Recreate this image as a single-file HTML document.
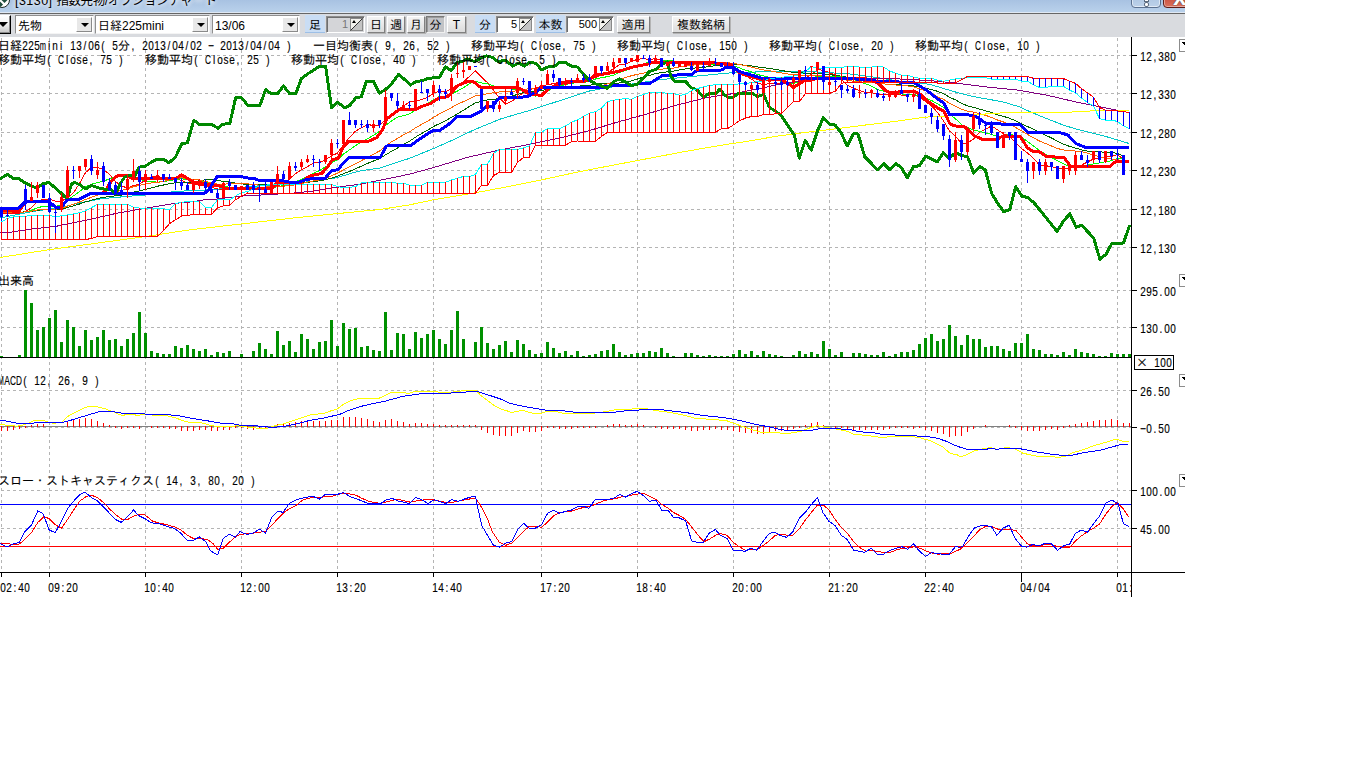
<!DOCTYPE html>
<html lang="ja"><head><meta charset="utf-8"><title>[3130] 指数先物/オプションチャート</title>
<style>
html,body{margin:0;padding:0;background:#fff;width:1366px;height:768px;overflow:hidden}
body{position:relative;font-family:"Liberation Sans","IPAGothic",sans-serif;font-size:12px;color:#000}
.chart{position:absolute;left:0;top:0}
.chart text.c{font-family:"IPAGothic","Noto Sans CJK JP",monospace;font-size:12px;stroke:#000;stroke-width:.1px}
.chart text.l{font-family:"Liberation Sans",sans-serif;font-size:12.5px;text-anchor:middle;stroke:#000;stroke-width:.15px}
#win{position:absolute;left:0;top:0;width:1185px;height:37px;overflow:hidden;z-index:2}
#title{position:absolute;left:0;top:0;width:1185px;height:12px;background:linear-gradient(#a8c2e2,#b9d1eb)}
#ttext{position:absolute;left:15px;top:-6px;font:12.5px/14px "Liberation Sans","Noto Sans CJK JP",sans-serif;color:#000;white-space:nowrap;text-shadow:0 0 5px #fff,0 0 5px #fff}
#ttext .n{letter-spacing:.45px}
#ttext .j{letter-spacing:-.4px}
#ticon{position:absolute;left:-6px;top:-8px;width:16px;height:16px;border-radius:50%;border:1px solid #1c2a24;background:#fff;box-sizing:border-box;overflow:hidden}
#ticon i{position:absolute;left:7px;top:4px;width:5px;height:5px;background:#1e4d3d;transform:rotate(45deg)}
#ticon b{position:absolute;left:2px;top:9px;width:5px;height:5px;background:#1e4d3d;transform:rotate(45deg)}
#bhelp{position:absolute;left:1131px;top:-10px;width:30px;height:18px;border:1px solid #5b7190;border-radius:0 0 4px 4px;box-sizing:border-box;background:linear-gradient(#a4bedd,#bdd2ea);box-shadow:inset 0 0 0 1px rgba(255,255,255,.55)}
#bhelp b{position:absolute;left:13px;top:12px;width:3px;height:3px;background:#fff;border:1px solid #5b6b7f;border-radius:2px;box-sizing:content-box;margin:-1px}
#bhelp u{position:absolute;left:13px;top:8px;width:3px;height:3px;background:#fff;border:1px solid #5b6b7f;border-top:0;box-sizing:content-box;margin:-1px}
#bclose{position:absolute;left:1163px;top:-10px;width:40px;height:18px;border:1px solid #5e1c17;border-radius:0 0 4px 4px;box-sizing:border-box;background:linear-gradient(#c0392b,#d9705c);box-shadow:inset 0 0 0 1px rgba(255,255,255,.4)}
#bclose span{position:absolute;left:9px;top:-2px;font:bold 24px/16px "Liberation Sans",sans-serif;color:#fff;text-shadow:0 0 1px #444,0 0 1px #444}
#tline1{position:absolute;left:0;top:12px;width:1185px;height:1px;background:#dfe8f3}
#tline2{position:absolute;left:0;top:13px;width:1185px;height:1px;background:#666}
#tbar{position:absolute;left:0;top:14px;width:1185px;height:23px;background:#d9dbdf}
.cb{position:absolute;top:1px;height:19px;background:#fff;box-sizing:border-box;border:1px solid;border-color:#8f8f8f #f4f4f4 #f4f4f4 #8f8f8f}
.cb .t{position:absolute;left:2px;top:3px;font:12px/14px "Liberation Sans","IPAGothic",sans-serif;white-space:nowrap}
.cb .a{position:absolute;right:1px;top:1px;width:16px;height:15px;box-sizing:border-box;background:#e8e8e8;border:1px solid;border-color:#fff #8a8a8a #8a8a8a #fff}
.cb .a:after{content:"";position:absolute;left:4px;top:5px;border:4px solid transparent;border-top:4px solid #000;border-bottom:0}
#lbtn{position:absolute;left:-10px;top:1px;width:21px;height:19px;box-sizing:border-box;background:linear-gradient(#fff,#f2f2f2 45%,#c4c4c4);border:1px solid;border-color:#fff #000 #000 #fff;box-shadow:inset -1px -1px 0 #8a8a8a}
#lbtn i{position:absolute;left:7px;top:6px;border:5px solid transparent;border-top:5px solid #000;border-bottom:0}
.lb{position:absolute;top:1px;height:18px;background:#c9ddf4;border-bottom:1px solid #9dbfe6;box-sizing:border-box;font:12px/21px "Liberation Sans","IPAGothic",sans-serif;text-align:center;overflow:hidden}
.sp{position:absolute;top:2px;height:17px;background:#fff;box-sizing:border-box;border:1px solid;border-color:#8c8c8c #fff #fff #8c8c8c;box-shadow:inset 1px 1px 0 #6e6e6e}
.sp.dis{background:#d4d5d8}
.sp .v{position:absolute;right:16px;top:0px;font:11px/14px "Liberation Sans",sans-serif}
.sp.dis .v{color:#777}
.sp .ic{position:absolute;right:1px;top:1px;width:13px;height:13px}
.bt{position:absolute;top:2px;height:17px;box-sizing:border-box;background:linear-gradient(#f4f4f4,#dcdcdc);border:1px solid;border-color:#fff #808080 #808080 #fff;box-shadow:1px 1px 0 #b4b4b4;font:12px/16px "Liberation Sans","IPAGothic",sans-serif;text-align:center;white-space:nowrap;overflow:hidden}
.bt.on{background:#c2c3c6;border-color:#7a7a7a #f0f0f0 #f0f0f0 #7a7a7a;box-shadow:inset 1px 1px 0 #9a9a9a}
</style></head><body>
<div id="win">
 <div id="title"><div id="ticon"><i></i><b></b></div><div id="ttext"><span class="n">[3130] </span><span class="j">指数先物/オプションチャート</span></div><div id="bhelp"><u></u><b></b></div><div id="bclose"><span>x</span></div></div>
 <div id="tline1"></div><div id="tline2"></div>
 <div id="tbar">
  <div id="lbtn"><i></i></div>
  <div class="cb" style="left:15px;width:79px"><div class="t">先物</div><div class="a"></div></div>
  <div class="cb" style="left:95px;width:115px"><div class="t">日経225mini</div><div class="a"></div></div>
  <div class="cb" style="left:212px;width:88px"><div class="t">13/06</div><div class="a"></div></div>
  <div class="lb" style="left:305px;width:20px">足</div>
  <div class="sp dis" style="left:326px;width:39px"><div class="v">1</div><svg class="ic" viewBox="0 0 13 13"><rect x=".5" y=".5" width="12" height="12" fill="#f4f3ee" stroke="#8a8a8a"/><path d="M12 1L1 12H12z" fill="#c4c4c4"/><path d="M12.5 .5L.5 12.5" stroke="#333" fill="none"/><path d="M2 5l2-3 2 3z" fill="#000"/></svg></div>
  <div class="bt" style="left:367px;width:18px">日</div>
  <div class="bt" style="left:387px;width:18px">週</div>
  <div class="bt" style="left:407px;width:18px">月</div>
  <div class="bt on" style="left:426px;width:19px">分</div>
  <div class="bt" style="left:447px;width:19px">T</div>
  <div class="lb" style="left:475px;width:20px">分</div>
  <div class="sp" style="left:496px;width:38px"><div class="v">5</div><svg class="ic" viewBox="0 0 13 13"><rect x=".5" y=".5" width="12" height="12" fill="#f4f3ee" stroke="#8a8a8a"/><path d="M12 1L1 12H12z" fill="#c4c4c4"/><path d="M12.5 .5L.5 12.5" stroke="#333" fill="none"/><path d="M2 5l2-3 2 3z" fill="#000"/></svg></div>
  <div class="lb" style="left:536px;width:29px">本数</div>
  <div class="sp" style="left:566px;width:48px"><div class="v">500</div><svg class="ic" viewBox="0 0 13 13"><rect x=".5" y=".5" width="12" height="12" fill="#f4f3ee" stroke="#8a8a8a"/><path d="M12 1L1 12H12z" fill="#c4c4c4"/><path d="M12.5 .5L.5 12.5" stroke="#333" fill="none"/><path d="M2 5l2-3 2 3z" fill="#000"/></svg></div>
  <div class="bt" style="left:617px;width:33px">適用</div>
  <div class="bt" style="left:672px;width:58px">複数銘柄</div>
 </div>
</div>
<svg class="chart" width="1185" height="768" viewBox="0 0 1185 768">
<g shape-rendering="crispEdges">
<path d="M1.5 38V572M49.5 38V572M145.5 38V572M241.5 38V572M337.5 38V572M433.5 38V572M541.5 38V572M637.5 38V572M733.5 38V572M829.5 38V572M925.5 38V572M1021.5 38V572M1117.5 38V572M1 55.5H1131M1 93.5H1131M1 132.5H1131M1 170.5H1131M1 209.5H1131M1 247.5H1131M1 290.5H1131M1 327.5H1131M1 390.5H1131M1 427.5H1131M1 490.5H1131M1 528.5H1131" stroke="#b4b4b4" stroke-width="1" stroke-dasharray="3 3" fill="none"/>
<polyline points="1.5,213.0 7.5,213.8 13.5,213.5 19.5,213.2 25.5,211.7 31.5,207.7 37.5,201.6 43.5,199.1 49.5,199.4 55.5,201.1 61.5,201.1 67.5,198.0 73.5,192.7 79.5,183.5 85.5,172.7 91.5,167.4 97.5,167.4 103.5,169.7 109.5,174.4 115.5,181.4 121.5,186.1 127.5,187.9 133.5,185.5 139.5,184.1 145.5,180.1 151.5,177.0 157.5,176.3 163.5,177.9 169.5,177.2 175.5,178.8 181.5,180.3 187.5,183.2 193.5,184.0 199.5,184.9 205.5,186.0 211.5,187.4 217.5,189.0 223.5,189.0 229.5,189.5 235.5,189.8 241.5,188.4 247.5,186.8 253.5,188.1 259.5,188.9 265.5,189.6 271.5,188.9 277.5,185.8 283.5,183.6 289.5,178.9 295.5,173.7 301.5,169.8 307.5,166.7 313.5,163.0 319.5,162.4 325.5,159.9 331.5,155.9 337.5,153.0 343.5,145.0 349.5,137.3 355.5,131.2 361.5,127.8 367.5,124.6 373.5,125.4 379.5,125.4 385.5,119.8 391.5,114.3 397.5,109.7 403.5,105.9 409.5,102.2 415.5,100.7 421.5,99.8 427.5,97.3 433.5,93.4 439.5,90.8 445.5,91.8 451.5,88.7 457.5,84.7 463.5,81.8 469.5,76.4 475.5,70.9 481.5,77.1 487.5,82.7 493.5,90.3 499.5,98.0 505.5,104.0 511.5,101.4 517.5,97.4 523.5,92.2 529.5,89.8 535.5,88.1 541.5,86.1 547.5,84.6 553.5,83.7 559.5,82.2 565.5,80.8 571.5,80.3 577.5,81.1 583.5,81.4 589.5,80.3 595.5,77.2 601.5,74.8 607.5,72.4 613.5,68.8 619.5,64.6 625.5,64.0 631.5,61.5 637.5,59.3 643.5,58.7 649.5,59.6 655.5,58.5 661.5,60.3 667.5,61.8 673.5,63.3 679.5,63.1 685.5,63.9 691.5,64.5 697.5,64.5 703.5,64.6 709.5,64.6 715.5,64.9 721.5,64.3 727.5,65.8 733.5,67.2 739.5,71.2 745.5,75.6 751.5,79.2 757.5,83.3 763.5,84.4 769.5,83.8 775.5,83.5 781.5,83.5 787.5,82.6 793.5,82.3 799.5,80.6 805.5,78.1 811.5,74.3 817.5,69.6 823.5,70.3 829.5,72.7 835.5,74.8 841.5,79.5 847.5,85.2 853.5,88.3 859.5,90.4 865.5,92.7 871.5,92.7 877.5,94.0 883.5,94.2 889.5,94.5 895.5,94.3 901.5,95.1 907.5,95.1 913.5,94.3 919.5,97.4 925.5,101.3 931.5,106.0 937.5,112.3 943.5,120.8 949.5,130.9 955.5,136.3 961.5,143.2 967.5,143.0 973.5,139.1 979.5,132.2 985.5,129.5 991.5,125.8 997.5,129.8 1003.5,133.7 1009.5,135.9 1015.5,142.6 1021.5,148.4 1027.5,153.0 1033.5,158.2 1039.5,165.1 1045.5,165.7 1051.5,166.6 1057.5,168.2 1063.5,168.9 1069.5,168.0 1075.5,166.6 1081.5,165.1 1087.5,162.0 1093.5,159.1 1099.5,157.8 1105.5,157.1 1111.5,156.3 1117.5,154.7 1123.5,159.4" fill="none" stroke="#ff0000" stroke-width="1" />
<polyline points="0.0,218.0 30.0,212.0 64.4,206.6 79.0,203.0 102.5,198.6 127.4,196.4 146.4,194.9 178.6,191.2 200.0,190.5 258.8,185.9 292.5,183.7 321.8,180.0 336.4,177.8 358.4,171.2 380.0,168.0 409.3,158.4 433.4,148.6 453.2,139.8 473.7,130.0 501.0,118.8 530.0,110.3 559.3,100.8 588.6,91.2 603.2,88.3 632.5,83.9 661.8,79.5 691.0,76.6 730.0,72.9 770.0,71.5 810.0,71.5 850.0,74.0 880.0,78.0 900.0,81.5 929.3,84.2 943.9,88.6 958.6,92.9 973.2,96.6 990.0,99.5 1004.6,102.4 1019.3,106.8 1033.9,113.4 1048.6,119.3 1063.2,125.1 1077.8,129.5 1092.5,133.2 1107.1,136.9 1121.8,141.2 1128.8,143.4" fill="none" stroke="#00c8c8" stroke-width="1" />
<polyline points="1.5,212.2 7.5,212.4 13.5,212.3 19.5,212.2 25.5,211.9 31.5,211.3 37.5,210.3 43.5,209.7 49.5,209.7 55.5,209.8 61.5,209.2 67.5,207.5 73.5,205.8 79.5,204.0 85.5,201.9 91.5,200.2 97.5,198.6 103.5,197.4 109.5,196.5 115.5,195.8 121.5,195.1 127.5,193.7 133.5,192.1 139.5,190.9 145.5,189.4 151.5,187.9 157.5,186.2 163.5,185.0 169.5,183.7 175.5,182.8 181.5,182.4 187.5,182.6 193.5,182.0 199.5,180.8 205.5,179.8 211.5,179.7 217.5,180.8 223.5,181.2 229.5,182.0 235.5,183.2 241.5,183.8 247.5,184.6 253.5,184.9 259.5,184.9 265.5,184.9 271.5,184.4 277.5,184.2 283.5,184.5 289.5,183.9 295.5,183.6 301.5,182.9 307.5,182.3 313.5,181.5 319.5,180.9 325.5,179.8 331.5,178.1 337.5,176.2 343.5,173.7 349.5,171.4 355.5,168.9 361.5,166.1 367.5,163.4 373.5,161.0 379.5,158.6 385.5,154.9 391.5,151.3 397.5,148.0 403.5,144.6 409.5,141.2 415.5,137.1 421.5,133.5 427.5,130.3 433.5,126.5 439.5,123.6 445.5,120.7 451.5,117.3 457.5,113.9 463.5,110.3 469.5,106.4 475.5,102.9 481.5,101.5 487.5,99.8 493.5,99.4 499.5,98.6 505.5,97.4 511.5,96.2 517.5,94.4 523.5,92.7 529.5,91.4 535.5,91.1 541.5,90.6 547.5,89.3 553.5,88.3 559.5,87.4 565.5,87.1 571.5,86.7 577.5,86.1 583.5,85.9 589.5,85.3 595.5,84.2 601.5,83.9 607.5,83.6 613.5,83.3 619.5,83.0 625.5,82.8 631.5,80.8 637.5,79.0 643.5,77.0 649.5,75.3 655.5,73.7 661.5,72.6 667.5,71.8 673.5,71.2 679.5,69.9 685.5,68.9 691.5,68.3 697.5,67.8 703.5,67.4 709.5,66.4 715.5,65.7 721.5,65.1 727.5,64.7 733.5,64.5 739.5,64.6 745.5,65.4 751.5,66.0 757.5,66.9 763.5,67.6 769.5,68.5 775.5,69.3 781.5,70.4 787.5,71.6 793.5,72.4 799.5,72.7 805.5,73.2 811.5,73.1 817.5,73.1 823.5,73.8 829.5,74.6 835.5,75.4 841.5,76.2 847.5,77.3 853.5,78.5 859.5,79.7 865.5,80.9 871.5,81.8 877.5,83.0 883.5,83.9 889.5,84.4 895.5,84.7 901.5,85.0 907.5,85.3 913.5,85.9 919.5,87.1 925.5,88.2 931.5,89.5 937.5,91.3 943.5,93.6 949.5,97.2 955.5,99.9 961.5,103.3 967.5,105.9 973.5,107.3 979.5,109.1 985.5,110.8 991.5,112.5 997.5,114.8 1003.5,116.4 1009.5,118.2 1015.5,120.8 1021.5,123.7 1027.5,126.6 1033.5,129.2 1039.5,132.3 1045.5,135.1 1051.5,138.0 1057.5,141.2 1063.5,144.1 1069.5,146.4 1075.5,148.1 1081.5,149.8 1087.5,151.2 1093.5,151.8 1099.5,151.8 1105.5,152.3 1111.5,152.4 1117.5,153.5 1123.5,155.9" fill="none" stroke="#006400" stroke-width="1" />
<polyline points="0.0,233.0 8.8,232.5 29.3,229.3 55.6,226.4 87.8,219.8 117.1,213.2 146.4,208.1 175.7,203.3 190.0,202.0 204.6,199.8 216.4,199.1 241.2,196.1 292.5,193.2 314.5,191.0 336.4,187.3 358.4,184.4 380.0,180.3 409.3,174.2 433.4,167.6 467.8,157.3 497.1,150.5 526.4,144.9 559.3,138.1 588.6,130.8 617.8,122.0 647.1,113.9 676.4,105.2 705.7,97.8 720.0,95.6 734.6,93.4 749.3,90.5 763.9,87.6 781.5,83.9 796.1,81.7 815.2,79.2 837.1,78.4 866.4,78.4 900.0,79.0 929.3,80.5 958.6,83.4 987.8,87.1 1017.1,90.0 1046.4,95.1 1077.8,102.4 1092.5,105.4 1107.1,108.3 1121.8,111.2 1129.0,112.5" fill="none" stroke="#800080" stroke-width="1" />
<polyline points="1.5,212.5 7.5,212.9 13.5,212.7 19.5,212.6 25.5,211.8 31.5,210.3 37.5,207.7 43.5,206.3 49.5,206.3 55.5,206.4 61.5,204.4 67.5,199.8 73.5,195.9 79.5,191.4 85.5,186.9 91.5,184.3 97.5,182.7 103.5,181.2 109.5,178.9 115.5,177.1 121.5,176.8 127.5,177.7 133.5,177.6 139.5,179.2 145.5,180.8 151.5,181.6 157.5,182.1 163.5,181.7 169.5,180.6 175.5,179.5 181.5,178.7 187.5,179.8 193.5,181.0 199.5,181.0 205.5,182.4 211.5,183.8 217.5,186.1 223.5,186.5 229.5,187.2 235.5,187.9 241.5,187.9 247.5,187.9 253.5,188.5 259.5,189.2 265.5,189.7 271.5,188.6 277.5,186.3 283.5,185.8 289.5,183.9 295.5,181.7 301.5,179.3 307.5,176.3 313.5,173.3 319.5,170.6 325.5,166.8 331.5,162.9 337.5,159.9 343.5,154.0 349.5,149.9 355.5,145.6 361.5,141.9 367.5,138.8 373.5,135.2 379.5,131.4 385.5,125.5 391.5,121.0 397.5,117.2 403.5,115.7 409.5,113.8 415.5,110.2 421.5,107.1 427.5,103.5 433.5,99.7 439.5,96.5 445.5,96.2 451.5,94.2 457.5,91.0 463.5,87.6 469.5,83.6 475.5,81.4 481.5,82.9 487.5,83.7 493.5,86.0 499.5,87.2 505.5,87.5 511.5,89.2 517.5,90.0 523.5,91.2 529.5,93.9 535.5,96.1 541.5,93.8 547.5,91.0 553.5,87.9 559.5,86.0 565.5,84.5 571.5,83.2 577.5,82.8 583.5,82.6 589.5,81.2 595.5,79.0 601.5,77.6 607.5,76.7 613.5,75.1 619.5,72.4 625.5,70.6 631.5,68.2 637.5,65.8 643.5,63.8 649.5,62.1 655.5,61.3 661.5,60.9 667.5,60.5 673.5,61.0 679.5,61.3 685.5,61.2 691.5,62.4 697.5,63.1 703.5,63.9 709.5,63.9 715.5,64.4 721.5,64.4 727.5,65.1 733.5,65.9 739.5,67.9 745.5,70.2 751.5,71.8 757.5,74.6 763.5,75.8 769.5,77.5 775.5,79.5 781.5,81.4 787.5,83.0 793.5,83.3 799.5,82.2 805.5,80.8 811.5,78.9 817.5,76.1 823.5,76.3 829.5,76.6 835.5,76.5 841.5,76.9 847.5,77.4 853.5,79.3 859.5,81.5 865.5,83.8 871.5,86.1 877.5,89.6 883.5,91.2 889.5,92.4 895.5,93.5 901.5,93.9 907.5,94.6 913.5,94.2 919.5,96.0 925.5,97.8 931.5,100.5 937.5,103.7 943.5,107.5 949.5,114.1 955.5,118.8 961.5,124.6 967.5,127.6 973.5,129.9 979.5,131.5 985.5,132.9 991.5,134.5 997.5,136.4 1003.5,136.4 1009.5,134.0 1015.5,136.0 1021.5,137.1 1027.5,141.4 1033.5,146.0 1039.5,150.5 1045.5,154.1 1051.5,157.5 1057.5,160.6 1063.5,163.6 1069.5,166.6 1075.5,166.1 1081.5,165.8 1087.5,165.1 1093.5,164.0 1099.5,162.9 1105.5,161.8 1111.5,160.7 1117.5,158.4 1123.5,159.3" fill="none" stroke="#00ff00" stroke-width="1" />
<polyline points="1.5,212.2 7.5,212.5 13.5,212.4 19.5,212.3 25.5,211.9 31.5,211.2 37.5,209.8 43.5,209.1 49.5,209.2 55.5,209.2 61.5,208.4 67.5,206.3 73.5,204.3 79.5,202.0 85.5,199.4 91.5,197.3 97.5,195.2 103.5,193.7 109.5,192.6 115.5,191.7 121.5,190.6 127.5,188.7 133.5,186.7 139.5,185.3 145.5,183.8 151.5,182.9 157.5,182.4 163.5,181.5 169.5,179.8 175.5,178.3 181.5,177.7 187.5,178.7 193.5,179.3 199.5,180.1 205.5,181.6 211.5,182.7 217.5,184.1 223.5,184.1 229.5,183.9 235.5,183.7 241.5,183.3 247.5,183.8 253.5,184.7 259.5,185.1 265.5,186.1 271.5,186.2 277.5,186.2 283.5,186.2 289.5,185.5 295.5,184.8 301.5,183.6 307.5,182.1 313.5,180.9 319.5,179.9 325.5,178.3 331.5,175.7 337.5,173.1 343.5,169.9 349.5,166.9 355.5,163.6 361.5,160.6 367.5,157.5 373.5,154.2 379.5,151.0 385.5,146.2 391.5,141.9 397.5,138.5 403.5,134.8 409.5,131.8 415.5,127.9 421.5,124.5 427.5,121.2 433.5,117.4 439.5,113.9 445.5,110.9 451.5,107.6 457.5,104.1 463.5,101.6 469.5,98.7 475.5,95.8 481.5,95.0 487.5,93.6 493.5,92.8 499.5,91.9 505.5,91.9 511.5,91.7 517.5,90.5 523.5,89.4 529.5,88.8 535.5,88.7 541.5,88.3 547.5,87.3 553.5,87.0 559.5,86.6 565.5,86.0 571.5,86.2 577.5,86.4 583.5,86.9 589.5,87.6 595.5,87.5 601.5,85.7 607.5,83.9 613.5,81.5 619.5,79.2 625.5,77.5 631.5,75.7 637.5,74.3 643.5,73.2 649.5,71.6 655.5,70.1 661.5,69.2 667.5,68.6 673.5,68.1 679.5,66.9 685.5,65.9 691.5,65.3 697.5,64.5 703.5,63.9 709.5,63.0 715.5,62.8 721.5,62.6 727.5,62.8 733.5,63.4 739.5,64.6 745.5,65.7 751.5,67.1 757.5,68.8 763.5,69.9 769.5,70.7 775.5,72.0 781.5,72.9 787.5,74.0 793.5,74.6 799.5,75.0 805.5,75.5 811.5,75.3 817.5,75.3 823.5,76.1 829.5,77.0 835.5,78.0 841.5,79.1 847.5,80.2 853.5,81.3 859.5,81.8 865.5,82.3 871.5,82.5 877.5,82.9 883.5,83.8 889.5,84.5 895.5,85.0 901.5,85.4 907.5,86.0 913.5,86.8 919.5,88.7 925.5,90.8 931.5,93.3 937.5,96.7 943.5,99.4 949.5,103.3 955.5,106.1 961.5,109.2 967.5,111.1 973.5,112.1 979.5,113.7 985.5,115.3 991.5,117.5 997.5,120.0 1003.5,122.0 1009.5,124.1 1015.5,127.4 1021.5,130.8 1027.5,134.5 1033.5,137.9 1039.5,141.0 1045.5,143.5 1051.5,146.0 1057.5,148.5 1063.5,150.0 1069.5,150.3 1075.5,151.1 1081.5,151.5 1087.5,153.2 1093.5,155.0 1099.5,156.7 1105.5,158.0 1111.5,159.1 1117.5,159.5 1123.5,161.4" fill="none" stroke="#ff6400" stroke-width="1" />
<polyline points="0.0,257.5 50.0,249.5 146.0,236.5 190.0,229.8 241.0,224.0 292.5,218.1 336.4,213.7 380.0,209.5 409.3,204.9 433.4,199.8 475.2,192.8 511.8,185.9 541.0,180.0 580.0,171.5 682.3,152.0 720.0,145.4 749.3,141.0 778.6,135.9 807.8,132.2 837.1,128.6 866.4,124.9 895.7,121.3 914.6,118.6 929.3,116.8 958.6,115.3 987.8,113.9 1004.6,112.7 1046.4,112.2 1070.5,112.2 1077.8,111.2 1121.8,110.5 1128.8,110.5" fill="none" stroke="#ffff00" stroke-width="1" />
<polyline points="0.0,210.3 19.0,211.3 25.6,201.5 49.0,201.5 55.6,207.3 61.5,207.3 67.3,199.3 79.1,199.3 90.8,193.4 102.5,193.4 106.1,189.8 111.3,181.0 117.1,175.9 125.9,175.1 131.8,178.4 175.7,178.8 181.6,174.8 187.4,178.4 193.3,182.5 200.0,182.5 206.1,184.4 219.3,185.9 225.1,188.1 272.0,188.1 277.8,182.2 301.3,182.2 307.1,177.8 311.5,175.6 321.8,173.4 327.6,166.9 332.8,159.2 337.9,158.8 343.7,146.4 348.8,141.5 367.8,141.5 376.6,137.8 382.5,129.8 386.9,118.8 398.6,110.0 416.1,109.3 422.0,106.4 430.8,103.4 439.6,97.6 446.9,96.9 451.3,93.2 457.1,85.9 467.4,81.5 473.2,81.5 480.6,87.3 512.8,87.3 521.6,89.2 527.4,93.2 540.0,95.4 541.4,95.6 549.0,88.3 559.3,83.9 565.1,82.5 588.6,80.7 594.4,75.1 606.1,73.7 617.8,71.5 632.5,67.1 647.1,64.2 654.5,62.0 720.3,63.1 731.7,64.9 739.0,72.9 750.7,76.6 762.5,79.8 781.5,79.8 788.8,83.9 793.5,87.6 799.1,83.9 804.9,80.3 810.8,80.3 816.6,78.4 866.4,78.8 878.1,83.2 885.4,90.5 889.8,92.7 895.7,92.7 901.6,91.2 914.6,91.5 920.5,94.4 926.4,100.3 938.1,108.3 943.9,111.2 949.8,123.7 954.2,125.9 964.4,126.6 970.3,131.7 974.7,136.1 982.0,139.1 996.6,139.8 1002.5,136.1 1020.1,136.1 1027.4,147.8 1033.2,151.5 1039.1,151.5 1046.4,156.6 1064.0,157.4 1069.8,165.4 1070.5,166.1 1110.1,166.1 1115.9,161.4 1128.8,161.7" fill="none" stroke="#ff0000" stroke-width="3" stroke-linejoin="round"/>
<polyline points="0.0,208.1 19.0,208.1 25.6,201.5 49.0,201.5 55.6,207.3 61.5,207.3 67.3,199.3 79.1,199.3 90.8,193.4 190.3,193.4 204.6,193.2 208.3,190.3 217.1,176.4 241.2,176.4 245.6,177.8 254.4,178.6 258.8,180.3 280.8,180.3 289.6,182.2 298.3,182.2 307.1,179.3 314.5,178.6 324.7,178.6 332.0,170.5 337.9,169.8 343.7,162.5 348.9,157.8 380.3,157.3 386.2,146.1 390.0,145.6 410.3,145.9 416.1,141.5 427.8,133.5 433.7,130.5 439.6,130.5 448.3,124.7 457.1,116.6 470.3,116.6 480.6,111.5 486.4,106.4 492.3,106.4 499.6,97.6 527.4,96.9 533.3,93.2 535.9,92.7 541.4,87.6 600.3,87.6 612.0,85.4 632.5,85.4 638.3,83.9 650.1,83.2 655.9,79.5 661.8,75.9 670.6,75.1 691.1,74.8 696.9,70.5 721.8,70.0 725.9,67.1 733.2,67.1 739.0,71.5 751.5,75.1 762.5,78.4 793.2,78.4 807.8,78.8 844.5,78.8 866.4,79.2 872.3,80.3 879.6,81.7 910.3,82.2 913.2,82.0 919.0,85.6 926.4,90.0 936.6,98.1 943.9,103.2 949.8,114.9 968.8,114.9 976.1,116.4 986.4,123.7 1020.1,124.4 1027.4,132.0 1053.7,132.0 1062.5,133.2 1068.4,135.4 1075.7,143.5 1084.5,147.1 1085.2,147.1 1128.8,147.4" fill="none" stroke="#0000ff" stroke-width="3" stroke-linejoin="round"/>
<polyline points="0.0,178.8 7.3,174.4 13.2,178.4 19.0,178.8 25.6,183.2 31.5,186.1 37.3,188.0 42.5,183.9 49.0,182.5 55.6,188.3 61.5,193.4 64.4,196.4 67.3,197.8 71.7,183.9 74.7,182.5 79.8,184.7 85.7,189.0 91.5,185.4 97.4,187.6 104.0,189.0 109.8,189.0 115.7,193.4 120.1,183.9 124.5,177.3 128.8,175.1 134.7,176.6 139.1,167.1 144.9,166.4 151.5,162.0 157.4,159.0 163.3,159.3 169.1,162.7 175.7,156.8 180.0,147.2 182.2,143.6 187.3,142.8 193.9,120.2 199.0,124.1 211.5,124.1 217.8,128.2 222.5,124.1 229.8,123.8 235.6,97.8 241.5,97.8 248.1,105.5 259.8,105.5 265.7,89.7 271.5,93.8 277.4,93.8 283.5,86.0 289.8,93.8 295.7,93.8 301.5,78.4 307.4,74.0 313.2,70.4 319.1,66.4 325.7,66.4 331.5,107.7 337.4,102.1 340.0,104.2 345.1,107.8 349.5,105.6 356.1,97.6 361.2,96.9 366.4,81.5 373.7,81.5 379.5,93.2 385.4,89.5 391.2,84.4 398.6,74.2 404.4,79.3 410.3,85.1 416.1,81.5 422.0,80.7 427.8,78.6 433.7,77.8 439.6,77.1 445.4,66.8 451.3,70.5 457.1,62.4 463.0,61.0 467.4,58.8 474.7,61.7 480.6,58.1 486.4,55.9 492.3,57.3 498.1,61.7 505.4,60.2 512.8,66.1 518.6,63.2 524.5,66.1 530.0,62.0 535.9,63.4 541.7,70.0 547.6,67.1 554.2,66.4 559.3,62.7 565.9,62.7 571.7,66.4 577.6,67.1 583.4,74.4 589.3,80.3 595.9,83.9 601.7,86.1 606.9,88.3 613.5,81.7 619.3,78.8 625.2,81.7 631.0,85.4 636.9,84.7 643.5,78.1 649.3,71.5 655.9,69.3 661.8,64.2 667.6,62.0 670.6,75.9 674.2,81.0 685.2,81.0 691.1,87.6 696.9,89.8 703.5,97.1 709.4,93.4 715.9,93.4 720.0,89.0 724.4,94.9 728.8,97.4 733.2,97.1 739.0,93.0 751.5,93.0 757.5,96.4 763.5,94.5 769.5,107.3 780.8,114.9 789.0,127.1 794.4,135.2 799.3,158.2 805.2,140.6 811.2,150.1 817.4,131.1 823.4,117.6 829.6,124.4 835.0,124.9 841.0,132.5 847.2,146.0 853.2,133.9 858.0,133.9 864.8,156.9 871.6,163.7 877.5,169.9 883.8,163.7 889.7,169.6 895.9,163.7 901.4,167.7 907.3,177.7 913.6,166.4 919.5,165.8 925.7,156.3 931.7,159.0 937.4,161.8 943.3,152.8 949.3,158.2 955.5,152.8 961.5,155.5 967.7,156.9 973.7,173.1 979.9,166.4 985.3,169.9 991.6,193.4 997.5,202.9 1003.5,211.6 1009.7,209.7 1015.7,186.7 1021.9,196.2 1027.9,197.5 1034.1,202.9 1057.1,231.4 1063.9,220.5 1069.8,213.8 1076.1,227.3 1081.5,225.1 1093.7,238.1 1099.9,259.3 1105.9,254.4 1111.8,243.6 1123.5,243.0 1129.7,225.1" fill="none" stroke="#008800" stroke-width="3" stroke-linejoin="round"/>
<polyline points="1.5,222.0 7.5,218.3 13.5,216.9 19.5,216.1 25.5,216.1 31.5,215.8 37.5,215.4 43.5,215.4 49.5,215.4 55.5,216.9 61.5,215.8 67.5,215.0 73.5,213.9 79.5,212.8 85.5,211.0 91.5,207.6 97.5,204.4 103.5,204.4 109.5,204.4 115.5,204.4 121.5,204.4 127.5,204.4 133.5,207.3 139.5,208.1 145.5,208.1 151.5,208.1 157.5,208.5 163.5,208.8 169.5,209.5 175.5,203.7 181.5,202.2 187.5,201.8 193.5,201.3 199.5,201.3 205.5,207.6 211.5,207.6 217.5,199.8 223.5,199.8 229.5,199.8 235.5,196.1 241.5,192.5 247.5,191.7 253.5,188.8 259.5,185.9 265.5,185.2 271.5,184.4 277.5,184.4 283.5,184.4 289.5,184.4 295.5,184.4 301.5,184.4 307.5,184.4 313.5,184.4 319.5,184.4 325.5,184.4 331.5,184.4 337.5,186.6 343.5,187.6 349.5,187.3 355.5,186.6 361.5,183.0 367.5,182.2 373.5,182.2 379.5,182.2 385.5,182.2 391.5,182.2 397.5,183.3 403.5,183.3 409.5,185.2 415.5,185.2 421.5,185.2 427.5,182.2 433.5,182.2 439.5,182.2 445.5,182.2 451.5,180.0 457.5,178.3 463.5,176.4 469.5,176.4 475.5,174.5 481.5,164.2 487.5,164.2 493.5,153.4 499.5,149.3 505.5,149.3 511.5,149.3 517.5,149.3 523.5,147.8 529.5,146.1 535.5,132.4 541.5,132.4 547.5,128.5 553.5,128.5 559.5,128.5 565.5,126.1 571.5,122.2 577.5,119.8 583.5,116.4 589.5,113.2 595.5,111.7 601.5,108.1 607.5,101.5 613.5,100.3 619.5,99.3 625.5,98.6 631.5,99.3 637.5,96.4 643.5,94.5 649.5,92.4 655.5,92.4 661.5,92.4 667.5,93.4 673.5,93.4 679.5,95.3 685.5,94.5 691.5,90.5 697.5,88.6 703.5,86.9 709.5,85.4 715.5,84.7 721.5,84.4 727.5,84.4 733.5,84.4 739.5,83.9 745.5,83.9 751.5,82.5 757.5,81.7 763.5,81.0 769.5,78.8 775.5,78.1 781.5,77.3 787.5,76.6 793.5,75.9 799.5,75.1 805.5,71.5 811.5,66.4 817.5,68.6 823.5,67.8 829.5,67.8 835.5,67.8 841.5,67.8 847.5,66.1 853.5,66.1 859.5,67.1 865.5,67.1 871.5,67.1 877.5,66.1 883.5,67.1 889.5,70.7 895.5,73.4 901.5,75.1 907.5,75.1 913.5,77.1 919.5,78.2 925.5,78.2 931.5,78.2 937.5,80.2 943.5,81.2 949.5,80.2 955.5,78.9 961.5,78.3 967.5,77.6 973.5,77.6 979.5,77.6 985.5,77.6 991.5,79.0 997.5,79.0 1003.5,79.0 1009.5,79.0 1015.5,79.0 1021.5,81.2 1027.5,81.2 1033.5,84.9 1039.5,87.4 1045.5,87.4 1051.5,86.4 1057.5,86.4 1063.5,86.4 1069.5,90.0 1075.5,92.9 1081.5,98.1 1087.5,102.5 1093.5,106.1 1099.5,118.6 1105.5,120.0 1111.5,120.0 1117.5,121.5 1123.5,125.9 1129.5,128.8" fill="none" stroke="#00ffff" stroke-width="1" />
<polyline points="1.5,239.6 7.5,239.6 13.5,239.6 19.5,239.6 25.5,239.6 31.5,239.6 37.5,239.6 43.5,239.6 49.5,239.6 55.5,239.6 61.5,239.6 67.5,239.6 73.5,239.6 79.5,239.6 85.5,239.6 91.5,238.4 97.5,236.6 103.5,236.6 109.5,236.6 115.5,236.6 121.5,236.6 127.5,236.6 133.5,236.6 139.5,236.6 145.5,236.6 151.5,236.6 157.5,236.6 163.5,230.5 169.5,223.7 175.5,219.8 181.5,216.1 187.5,215.4 193.5,214.4 199.5,214.4 205.5,214.4 211.5,214.4 217.5,207.8 223.5,205.7 229.5,205.7 235.5,199.8 241.5,196.1 247.5,193.2 253.5,193.2 259.5,193.2 265.5,193.2 271.5,193.2 277.5,193.2 283.5,193.2 289.5,193.2 295.5,193.2 301.5,193.2 307.5,193.2 313.5,193.2 319.5,193.2 325.5,193.2 331.5,193.2 337.5,193.2 343.5,193.2 349.5,193.2 355.5,193.2 361.5,193.2 367.5,193.2 373.5,193.2 379.5,193.2 385.5,193.2 391.5,193.2 397.5,193.2 403.5,193.2 409.5,193.2 415.5,193.2 421.5,193.2 427.5,193.2 433.5,193.2 439.5,193.2 445.5,193.2 451.5,193.2 457.5,193.2 463.5,193.2 469.5,193.2 475.5,193.2 481.5,185.4 487.5,185.4 493.5,175.6 499.5,172.3 505.5,172.3 511.5,172.3 517.5,162.5 523.5,157.3 529.5,157.3 535.5,145.2 541.5,145.2 547.5,145.2 553.5,145.2 559.5,145.2 565.5,145.2 571.5,141.7 577.5,141.0 583.5,141.0 589.5,141.0 595.5,141.0 601.5,136.6 607.5,132.2 613.5,132.2 619.5,132.2 625.5,132.2 631.5,132.2 637.5,132.2 643.5,132.2 649.5,132.2 655.5,132.2 661.5,132.2 667.5,132.2 673.5,132.2 679.5,132.2 685.5,132.2 691.5,132.2 697.5,132.2 703.5,132.2 709.5,132.2 715.5,132.2 721.5,128.6 727.5,128.6 733.5,124.9 739.5,120.5 745.5,118.3 751.5,116.4 757.5,116.4 763.5,114.7 769.5,114.4 775.5,113.9 781.5,113.5 787.5,107.3 793.5,101.5 799.5,101.5 805.5,93.4 811.5,93.4 817.5,93.4 823.5,93.4 829.5,93.4 835.5,91.2 841.5,83.2 847.5,82.5 853.5,82.5 859.5,82.5 865.5,81.7 871.5,81.7 877.5,81.7 883.5,82.5 889.5,82.5 895.5,82.5 901.5,82.4 907.5,82.4 913.5,82.4 919.5,82.7 925.5,82.7 931.5,82.7 937.5,83.0 943.5,83.0 949.5,83.0 955.5,83.0 961.5,79.8 967.5,76.5 973.5,76.5 979.5,76.5 985.5,76.5 991.5,76.5 997.5,76.5 1003.5,76.5 1009.5,76.5 1015.5,76.5 1021.5,76.5 1027.5,76.5 1033.5,78.3 1039.5,78.3 1045.5,78.4 1051.5,78.4 1057.5,78.6 1063.5,78.6 1069.5,81.2 1075.5,83.4 1081.5,88.6 1087.5,92.9 1093.5,97.3 1099.5,107.6 1105.5,110.1 1111.5,110.5 1117.5,110.9 1123.5,111.7 1129.5,112.4" fill="none" stroke="#ff0000" stroke-width="1" />
<path d="M1.5 222.0V239.6M7.5 218.3V239.6M13.5 216.9V239.6M19.5 216.1V239.6M25.5 216.1V239.6M31.5 215.8V239.6M37.5 215.4V239.6M43.5 215.4V239.6M49.5 215.4V239.6M55.5 216.9V239.6M61.5 215.8V239.6M67.5 215.0V239.6M73.5 213.9V239.6M79.5 212.8V239.6M85.5 211.0V239.6M91.5 207.6V238.4M97.5 204.4V236.6M103.5 204.4V236.6M109.5 204.4V236.6M115.5 204.4V236.6M121.5 204.4V236.6M127.5 204.4V236.6M133.5 207.3V236.6M139.5 208.1V236.6M145.5 208.1V236.6M151.5 208.1V236.6M157.5 208.5V236.6M163.5 208.8V230.5M169.5 209.5V223.7M175.5 203.7V219.8M181.5 202.2V216.1M187.5 201.8V215.4M193.5 201.3V214.4M199.5 201.3V214.4M205.5 207.6V214.4M211.5 207.6V214.4M217.5 199.8V207.8M223.5 199.8V205.7M229.5 199.8V205.7M235.5 196.1V199.8M241.5 192.5V196.1M247.5 191.7V193.2M253.5 188.8V193.2M259.5 185.9V193.2M265.5 185.2V193.2M271.5 184.4V193.2M277.5 184.4V193.2M283.5 184.4V193.2M289.5 184.4V193.2M295.5 184.4V193.2M301.5 184.4V193.2M307.5 184.4V193.2M313.5 184.4V193.2M319.5 184.4V193.2M325.5 184.4V193.2M331.5 184.4V193.2M337.5 186.6V193.2M343.5 187.6V193.2M349.5 187.3V193.2M355.5 186.6V193.2M361.5 183.0V193.2M367.5 182.2V193.2M373.5 182.2V193.2M379.5 182.2V193.2M385.5 182.2V193.2M391.5 182.2V193.2M397.5 183.3V193.2M403.5 183.3V193.2M409.5 185.2V193.2M415.5 185.2V193.2M421.5 185.2V193.2M427.5 182.2V193.2M433.5 182.2V193.2M439.5 182.2V193.2M445.5 182.2V193.2M451.5 180.0V193.2M457.5 178.3V193.2M463.5 176.4V193.2M469.5 176.4V193.2M475.5 174.5V193.2M481.5 164.2V185.4M487.5 164.2V185.4M493.5 153.4V175.6M499.5 149.3V172.3M505.5 149.3V172.3M511.5 149.3V172.3M517.5 149.3V162.5M523.5 147.8V157.3M529.5 146.1V157.3M535.5 132.4V145.2M541.5 132.4V145.2M547.5 128.5V145.2M553.5 128.5V145.2M559.5 128.5V145.2M565.5 126.1V145.2M571.5 122.2V141.7M577.5 119.8V141.0M583.5 116.4V141.0M589.5 113.2V141.0M595.5 111.7V141.0M601.5 108.1V136.6M607.5 101.5V132.2M613.5 100.3V132.2M619.5 99.3V132.2M625.5 98.6V132.2M631.5 99.3V132.2M637.5 96.4V132.2M643.5 94.5V132.2M649.5 92.4V132.2M655.5 92.4V132.2M661.5 92.4V132.2M667.5 93.4V132.2M673.5 93.4V132.2M679.5 95.3V132.2M685.5 94.5V132.2M691.5 90.5V132.2M697.5 88.6V132.2M703.5 86.9V132.2M709.5 85.4V132.2M715.5 84.7V132.2M721.5 84.4V128.6M727.5 84.4V128.6M733.5 84.4V124.9M739.5 83.9V120.5M745.5 83.9V118.3M751.5 82.5V116.4M757.5 81.7V116.4M763.5 81.0V114.7M769.5 78.8V114.4M775.5 78.1V113.9M781.5 77.3V113.5M787.5 76.6V107.3M793.5 75.9V101.5M799.5 75.1V101.5M805.5 71.5V93.4M811.5 66.4V93.4M817.5 68.6V93.4M823.5 67.8V93.4M829.5 67.8V93.4M835.5 67.8V91.2M841.5 67.8V83.2M847.5 66.1V82.5M853.5 66.1V82.5M859.5 67.1V82.5M865.5 67.1V81.7M871.5 67.1V81.7M877.5 66.1V81.7M883.5 67.1V82.5M889.5 70.7V82.5M895.5 73.4V82.5M901.5 75.1V82.4M907.5 75.1V82.4M913.5 77.1V82.4M919.5 78.2V82.7M925.5 78.2V82.7M931.5 78.2V82.7M937.5 80.2V83.0M943.5 81.2V83.0M949.5 80.2V83.0M955.5 78.9V83.0M961.5 78.3V79.8" stroke="#ff0000" stroke-width="1" fill="none"/>
<path d="M991.5 76.5V79.0M997.5 76.5V79.0M1003.5 76.5V79.0M1009.5 76.5V79.0M1015.5 76.5V79.0M1021.5 76.5V81.2M1027.5 76.5V81.2M1033.5 78.3V84.9M1039.5 78.3V87.4M1045.5 78.4V87.4M1051.5 78.4V86.4M1057.5 78.6V86.4M1063.5 78.6V86.4M1069.5 81.2V90.0M1075.5 83.4V92.9M1081.5 88.6V98.1M1087.5 92.9V102.5M1093.5 97.3V106.1M1099.5 107.6V118.6M1105.5 110.1V120.0M1111.5 110.5V120.0M1117.5 110.9V121.5M1123.5 111.7V125.9M1129.5 112.4V128.8" stroke="#0000ff" stroke-width="1" fill="none"/>
<path d="M12 210h3V213h-3zM13 213h1V214h-1zM18 211h3V212h-3zM19 210h1V211h-1zM19 212h1V213h-1zM30 197h3V201h-3zM31 182h1V197h-1zM36 185h3V193h-3zM37 182h1V185h-1zM37 193h1V198h-1zM60 197h3V210h-3zM61 193h1V197h-1zM61 210h1V212h-1zM66 170h3V198h-3zM67 166h1V170h-1zM78 166h3V171h-3zM79 171h1V178h-1zM84 159h3V167h-3zM85 167h1V170h-1zM96 170h3V175h-3zM97 162h1V170h-1zM97 175h1V179h-1zM126 179h3V190h-3zM127 174h1V179h-1zM127 190h1V198h-1zM132 171h3V178h-3zM133 159h1V171h-1zM133 178h1V182h-1zM144 174h3V182h-3zM145 170h1V174h-1zM145 182h1V190h-1zM156 175h3V179h-3zM157 170h1V175h-1zM157 179h1V182h-1zM192 183h3V190h-3zM193 179h1V183h-1zM193 190h1V193h-1zM198 183h3V186h-3zM199 179h1V183h-1zM199 186h1V189h-1zM222 183h3V198h-3zM223 182h1V183h-1zM240 186h3V189h-3zM241 189h1V193h-1zM270 182h3V193h-3zM276 174h3V182h-3zM277 166h1V174h-1zM277 182h1V183h-1zM288 166h3V179h-3zM289 162h1V166h-1zM300 162h3V167h-3zM301 159h1V162h-1zM301 167h1V170h-1zM306 159h3V162h-3zM307 155h1V159h-1zM307 162h1V163h-1zM324 155h3V162h-3zM325 162h1V164h-1zM330 143h3V155h-3zM331 139h1V143h-1zM331 155h1V159h-1zM342 120h3V144h-3zM372 124h3V128h-3zM373 120h1V124h-1zM373 128h1V132h-1zM384 97h3V120h-3zM385 90h1V97h-1zM402 105h3V109h-3zM403 101h1V105h-1zM414 89h3V109h-3zM432 85h3V93h-3zM433 81h1V85h-1zM433 93h1V97h-1zM450 78h3V93h-3zM451 74h1V78h-1zM451 93h1V101h-1zM456 73h3V74h-3zM457 62h1V73h-1zM457 74h1V78h-1zM462 70h3V72h-3zM463 62h1V70h-1zM463 72h1V78h-1zM468 66h3V70h-3zM486 101h3V109h-3zM487 109h1V112h-1zM498 105h3V109h-3zM499 101h1V105h-1zM499 109h1V112h-1zM504 97h3V101h-3zM505 89h1V97h-1zM505 101h1V105h-1zM516 81h3V93h-3zM517 78h1V81h-1zM517 93h1V98h-1zM534 88h3V93h-3zM535 85h1V88h-1zM535 93h1V94h-1zM540 85h3V89h-3zM541 81h1V85h-1zM546 74h3V85h-3zM547 70h1V74h-1zM564 82h3V85h-3zM565 78h1V82h-1zM576 78h3V82h-3zM577 74h1V78h-1zM594 66h3V78h-3zM606 66h3V71h-3zM607 62h1V66h-1zM612 62h3V67h-3zM613 58h1V62h-1zM613 67h1V71h-1zM618 58h3V63h-3zM630 58h3V62h-3zM636 55h3V62h-3zM654 58h3V62h-3zM655 55h1V58h-1zM655 62h1V63h-1zM666 62h3V66h-3zM678 62h3V67h-3zM684 62h3V67h-3zM696 62h3V71h-3zM708 62h3V66h-3zM709 58h1V62h-1zM750 85h3V89h-3zM751 82h1V85h-1zM751 89h1V90h-1zM762 80h3V93h-3zM763 78h1V80h-1zM768 79h3V82h-3zM769 78h1V79h-1zM769 82h1V86h-1zM792 78h3V82h-3zM793 75h1V78h-1zM793 82h1V85h-1zM798 70h3V78h-3zM799 78h1V82h-1zM810 66h3V67h-3zM811 67h1V80h-1zM816 62h3V70h-3zM817 70h1V71h-1zM828 82h3V85h-3zM829 71h1V82h-1zM829 85h1V93h-1zM858 92h3V93h-3zM859 85h1V92h-1zM859 93h1V98h-1zM870 90h3V93h-3zM871 89h1V90h-1zM871 93h1V98h-1zM888 93h3V97h-3zM889 97h1V101h-1zM894 93h3V97h-3zM895 90h1V93h-1zM895 97h1V98h-1zM912 94h3V97h-3zM913 89h1V94h-1zM913 97h1V102h-1zM954 140h3V160h-3zM955 132h1V140h-1zM955 160h1V162h-1zM966 128h3V152h-3zM967 152h1V155h-1zM972 116h3V129h-3zM973 112h1V116h-1zM973 129h1V132h-1zM1002 136h3V148h-3zM1003 132h1V136h-1zM1032 162h3V171h-3zM1033 171h1V179h-1zM1044 162h3V171h-3zM1045 159h1V162h-1zM1045 171h1V175h-1zM1062 166h3V179h-3zM1063 179h1V183h-1zM1068 166h3V171h-3zM1069 171h1V175h-1zM1074 155h3V171h-3zM1075 151h1V155h-1zM1075 171h1V175h-1zM1092 151h3V160h-3zM1093 160h1V163h-1zM1104 151h3V162h-3zM1105 162h1V163h-1z" fill="#ff0000"/>
<path d="M0 210h3V217h-3zM1 207h1V210h-1zM1 217h1V221h-1zM6 215h3V216h-3zM7 210h1V215h-1zM7 216h1V217h-1zM24 189h3V204h-3zM25 185h1V189h-1zM25 204h1V210h-1zM42 185h3V198h-3zM48 198h3V212h-3zM49 193h1V198h-1zM49 212h1V213h-1zM54 212h3V213h-3zM55 209h1V212h-1zM55 213h1V233h-1zM72 170h3V171h-3zM73 166h1V170h-1zM73 171h1V179h-1zM90 159h3V171h-3zM91 155h1V159h-1zM91 171h1V175h-1zM102 166h3V182h-3zM103 162h1V166h-1zM103 182h1V186h-1zM108 182h3V190h-3zM109 178h1V182h-1zM109 190h1V191h-1zM114 185h3V194h-3zM115 182h1V185h-1zM115 194h1V195h-1zM120 190h3V194h-3zM121 182h1V190h-1zM121 194h1V195h-1zM138 171h3V182h-3zM139 166h1V171h-1zM139 182h1V191h-1zM150 177h3V179h-3zM151 174h1V177h-1zM162 174h3V179h-3zM163 179h1V182h-1zM168 177h3V179h-3zM169 174h1V177h-1zM174 178h3V182h-3zM175 182h1V190h-1zM180 182h3V186h-3zM181 178h1V182h-1zM181 186h1V190h-1zM186 185h3V190h-3zM187 182h1V185h-1zM204 182h3V188h-3zM205 179h1V182h-1zM205 188h1V192h-1zM210 189h3V193h-3zM211 186h1V189h-1zM216 193h3V198h-3zM217 189h1V193h-1zM228 182h3V186h-3zM229 179h1V182h-1zM229 186h1V190h-1zM234 185h3V190h-3zM246 185h3V190h-3zM252 185h3V190h-3zM253 182h1V185h-1zM253 190h1V193h-1zM258 189h3V190h-3zM259 185h1V189h-1zM259 190h1V202h-1zM264 189h3V193h-3zM265 182h1V189h-1zM282 174h3V179h-3zM283 171h1V174h-1zM283 179h1V182h-1zM294 166h3V168h-3zM295 162h1V166h-1zM295 168h1V171h-1zM312 159h3V160h-3zM313 155h1V159h-1zM313 160h1V167h-1zM318 162h3V163h-3zM319 159h1V162h-1zM319 163h1V171h-1zM336 143h3V144h-3zM337 139h1V143h-1zM337 144h1V148h-1zM348 120h3V125h-3zM349 112h1V120h-1zM354 120h3V125h-3zM355 125h1V128h-1zM360 124h3V125h-3zM361 120h1V124h-1zM361 125h1V128h-1zM366 124h3V128h-3zM367 120h1V124h-1zM367 128h1V132h-1zM378 120h3V125h-3zM379 125h1V128h-1zM390 93h3V98h-3zM391 98h1V101h-1zM396 101h3V106h-3zM397 93h1V101h-1zM397 106h1V109h-1zM408 105h3V106h-3zM409 101h1V105h-1zM409 106h1V109h-1zM420 92h3V93h-3zM421 81h1V92h-1zM426 89h3V93h-3zM427 93h1V101h-1zM438 89h3V93h-3zM439 85h1V89h-1zM439 93h1V101h-1zM444 92h3V94h-3zM445 89h1V92h-1zM445 94h1V98h-1zM474 66h3V67h-3zM480 89h3V109h-3zM492 101h3V109h-3zM493 109h1V112h-1zM510 92h3V95h-3zM511 89h1V92h-1zM522 81h3V82h-3zM523 78h1V81h-1zM523 82h1V85h-1zM528 81h3V93h-3zM529 93h1V94h-1zM552 74h3V78h-3zM553 70h1V74h-1zM553 78h1V82h-1zM558 78h3V85h-3zM559 85h1V86h-1zM570 81h3V82h-3zM571 78h1V81h-1zM571 82h1V86h-1zM582 78h3V80h-3zM583 74h1V78h-1zM583 80h1V82h-1zM588 78h3V80h-3zM589 74h1V78h-1zM589 80h1V82h-1zM600 66h3V71h-3zM601 71h1V74h-1zM624 58h3V63h-3zM625 63h1V67h-1zM642 58h3V59h-3zM643 55h1V58h-1zM648 58h3V63h-3zM649 55h1V58h-1zM649 63h1V67h-1zM660 58h3V67h-3zM672 62h3V66h-3zM673 58h1V62h-1zM673 66h1V67h-1zM690 66h3V70h-3zM691 62h1V66h-1zM691 70h1V71h-1zM702 66h3V67h-3zM703 62h1V66h-1zM703 67h1V69h-1zM714 62h3V63h-3zM715 58h1V62h-1zM715 63h1V66h-1zM720 63h3V67h-3zM726 66h3V69h-3zM727 62h1V66h-1zM732 66h3V74h-3zM733 62h1V66h-1zM733 74h1V75h-1zM738 74h3V82h-3zM739 82h1V85h-1zM744 82h3V85h-3zM745 81h1V82h-1zM745 85h1V90h-1zM756 85h3V90h-3zM757 82h1V85h-1zM757 90h1V93h-1zM774 82h3V84h-3zM775 78h1V82h-1zM775 84h1V86h-1zM780 82h3V85h-3zM781 78h1V82h-1zM781 85h1V90h-1zM786 82h3V85h-3zM787 77h1V82h-1zM787 85h1V86h-1zM804 70h3V71h-3zM805 66h1V70h-1zM805 71h1V79h-1zM822 66h3V82h-3zM823 82h1V90h-1zM834 81h3V82h-3zM835 78h1V81h-1zM835 82h1V86h-1zM840 85h3V90h-3zM841 90h1V98h-1zM846 89h3V91h-3zM847 85h1V89h-1zM847 91h1V93h-1zM852 89h3V97h-3zM853 85h1V89h-1zM853 97h1V98h-1zM864 93h3V94h-3zM865 89h1V93h-1zM865 94h1V98h-1zM876 93h3V97h-3zM877 89h1V93h-1zM877 97h1V98h-1zM882 96h3V98h-3zM883 93h1V96h-1zM883 98h1V101h-1zM900 90h3V94h-3zM901 82h1V90h-1zM906 94h3V97h-3zM907 97h1V102h-1zM918 94h3V109h-3zM919 89h1V94h-1zM924 105h3V113h-3zM930 113h3V117h-3zM931 108h1V113h-1zM931 117h1V124h-1zM936 120h3V129h-3zM937 116h1V120h-1zM937 129h1V132h-1zM942 124h3V136h-3zM943 136h1V140h-1zM948 139h3V160h-3zM949 135h1V139h-1zM949 160h1V167h-1zM960 140h3V152h-3zM961 135h1V140h-1zM961 152h1V160h-1zM978 118h3V125h-3zM979 112h1V118h-1zM979 125h1V129h-1zM984 125h3V126h-3zM985 124h1V125h-1zM985 126h1V135h-1zM990 124h3V133h-3zM991 121h1V124h-1zM991 133h1V135h-1zM996 132h3V148h-3zM1008 132h3V136h-3zM1009 136h1V140h-1zM1014 132h3V160h-3zM1020 159h3V162h-3zM1021 151h1V159h-1zM1026 162h3V171h-3zM1027 159h1V162h-1zM1027 171h1V183h-1zM1038 162h3V171h-3zM1039 159h1V162h-1zM1039 171h1V175h-1zM1050 162h3V167h-3zM1051 167h1V171h-1zM1056 166h3V179h-3zM1080 155h3V160h-3zM1081 151h1V155h-1zM1086 160h3V163h-3zM1087 155h1V160h-1zM1087 163h1V167h-1zM1098 151h3V160h-3zM1099 160h1V163h-1zM1110 151h3V156h-3zM1111 156h1V160h-1zM1116 154h3V155h-3zM1117 148h1V154h-1zM1117 155h1V160h-1zM1122 155h3V175h-3z" fill="#0000ff"/>
<path d="M0 356h3v1h-3zM18 355h3v2h-3zM24 290h3v67h-3zM30 303h3v54h-3zM36 330h3v27h-3zM42 327h3v30h-3zM48 318h3v39h-3zM54 310h3v47h-3zM60 342h3v15h-3zM66 320h3v37h-3zM72 327h3v30h-3zM78 346h3v11h-3zM84 330h3v27h-3zM90 340h3v17h-3zM96 337h3v20h-3zM102 330h3v27h-3zM108 340h3v17h-3zM114 339h3v18h-3zM120 346h3v11h-3zM126 339h3v18h-3zM132 333h3v24h-3zM138 312h3v45h-3zM144 333h3v24h-3zM150 351h3v6h-3zM156 353h3v4h-3zM162 354h3v3h-3zM168 354h3v3h-3zM174 346h3v11h-3zM180 348h3v9h-3zM186 345h3v12h-3zM192 349h3v8h-3zM198 351h3v6h-3zM204 349h3v8h-3zM210 355h3v2h-3zM216 352h3v5h-3zM222 353h3v4h-3zM228 351h3v6h-3zM240 354h3v3h-3zM252 351h3v6h-3zM258 343h3v14h-3zM264 349h3v8h-3zM270 354h3v3h-3zM276 331h3v26h-3zM282 345h3v12h-3zM288 341h3v16h-3zM294 352h3v5h-3zM300 334h3v23h-3zM306 339h3v18h-3zM312 349h3v8h-3zM318 342h3v15h-3zM324 341h3v16h-3zM330 320h3v37h-3zM336 346h3v11h-3zM342 323h3v34h-3zM348 329h3v28h-3zM354 328h3v29h-3zM360 347h3v10h-3zM366 346h3v11h-3zM372 350h3v7h-3zM378 351h3v6h-3zM384 312h3v45h-3zM390 350h3v7h-3zM396 333h3v24h-3zM402 334h3v23h-3zM408 349h3v8h-3zM414 332h3v25h-3zM420 338h3v19h-3zM426 334h3v23h-3zM432 330h3v27h-3zM438 339h3v18h-3zM444 344h3v13h-3zM450 330h3v27h-3zM456 311h3v46h-3zM462 339h3v18h-3zM474 342h3v15h-3zM480 327h3v30h-3zM486 343h3v14h-3zM492 349h3v8h-3zM498 345h3v12h-3zM504 341h3v16h-3zM510 352h3v5h-3zM516 340h3v17h-3zM522 344h3v13h-3zM528 350h3v7h-3zM534 354h3v3h-3zM540 353h3v4h-3zM546 342h3v15h-3zM552 348h3v9h-3zM558 353h3v4h-3zM564 351h3v6h-3zM570 355h3v2h-3zM576 351h3v6h-3zM582 356h3v1h-3zM588 355h3v2h-3zM594 354h3v3h-3zM600 351h3v6h-3zM606 350h3v7h-3zM612 344h3v13h-3zM618 352h3v5h-3zM624 355h3v2h-3zM630 354h3v3h-3zM636 353h3v4h-3zM642 353h3v4h-3zM648 351h3v6h-3zM654 352h3v5h-3zM660 348h3v9h-3zM666 353h3v4h-3zM672 356h3v1h-3zM684 353h3v4h-3zM690 353h3v4h-3zM696 355h3v2h-3zM702 356h3v1h-3zM708 355h3v2h-3zM714 356h3v1h-3zM720 356h3v1h-3zM726 356h3v1h-3zM732 354h3v3h-3zM738 350h3v7h-3zM744 354h3v3h-3zM750 351h3v6h-3zM756 355h3v2h-3zM762 351h3v6h-3zM768 354h3v3h-3zM774 355h3v2h-3zM780 356h3v1h-3zM792 355h3v2h-3zM798 351h3v6h-3zM804 354h3v3h-3zM810 352h3v5h-3zM816 354h3v3h-3zM822 341h3v16h-3zM828 349h3v8h-3zM834 355h3v2h-3zM840 352h3v5h-3zM852 353h3v4h-3zM858 353h3v4h-3zM864 354h3v3h-3zM870 355h3v2h-3zM876 355h3v2h-3zM882 352h3v5h-3zM888 356h3v1h-3zM894 354h3v3h-3zM900 352h3v5h-3zM906 352h3v5h-3zM912 350h3v7h-3zM918 344h3v13h-3zM924 338h3v19h-3zM930 334h3v23h-3zM936 341h3v16h-3zM942 339h3v18h-3zM948 325h3v32h-3zM954 336h3v21h-3zM960 345h3v12h-3zM966 335h3v22h-3zM972 339h3v18h-3zM978 339h3v18h-3zM984 347h3v10h-3zM990 346h3v11h-3zM996 346h3v11h-3zM1002 349h3v8h-3zM1008 351h3v6h-3zM1014 343h3v14h-3zM1020 343h3v14h-3zM1026 334h3v23h-3zM1032 349h3v8h-3zM1038 350h3v7h-3zM1044 354h3v3h-3zM1050 354h3v3h-3zM1056 355h3v2h-3zM1062 352h3v5h-3zM1068 355h3v2h-3zM1074 349h3v8h-3zM1080 352h3v5h-3zM1086 353h3v4h-3zM1092 354h3v3h-3zM1098 356h3v1h-3zM1104 356h3v1h-3zM1110 353h3v4h-3zM1116 354h3v3h-3zM1122 354h3v3h-3zM1128 354h3v3h-3z" fill="#009000"/>
<rect x="0" y="357" width="1131" height="1" fill="#000"/>
<rect x="0" y="426" width="1131" height="1" fill="#808080"/>
<path d="M1.5 426V431M7.5 426V431M13.5 426V430M19.5 426V429M25.5 426V428M31.5 425V427M37.5 424V427M43.5 424V427M67.5 422V427M73.5 420V427M79.5 419V427M85.5 418V427M91.5 419V427M97.5 421V427M103.5 423V427M109.5 425V427M115.5 426V428M121.5 426V429M127.5 426V428M133.5 426V428M139.5 426V429M151.5 426V428M157.5 426V428M163.5 426V428M169.5 426V429M175.5 426V429M181.5 426V431M187.5 426V431M193.5 426V431M199.5 426V430M205.5 426V430M211.5 426V431M217.5 426V431M223.5 426V430M229.5 426V430M235.5 426V428M241.5 426V428M247.5 426V429M253.5 426V430M259.5 426V429M265.5 426V429M277.5 424V427M283.5 423V427M289.5 423V427M295.5 422V427M301.5 421V427M307.5 421V427M313.5 421V427M319.5 421V427M325.5 421V427M331.5 420V427M337.5 420V427M343.5 417V427M349.5 417V427M355.5 417V427M361.5 418V427M367.5 419V427M373.5 421V427M379.5 422V427M385.5 420V427M391.5 419V427M397.5 421V427M403.5 422V427M409.5 424V427M415.5 423V427M421.5 423V427M427.5 424V427M433.5 424V427M439.5 425V427M445.5 425V427M451.5 425V427M457.5 425V427M463.5 425V427M469.5 425V427M475.5 425V427M481.5 426V430M487.5 426V433M493.5 426V435M499.5 426V436M505.5 426V436M511.5 426V436M517.5 426V433M523.5 426V431M529.5 426V432M535.5 426V432M541.5 426V431M547.5 426V428M553.5 426V428M559.5 426V429M565.5 426V429M571.5 426V429M577.5 426V428M583.5 426V428M589.5 426V428M595.5 426V428M607.5 425V427M613.5 424V427M619.5 424V427M625.5 425V427M631.5 425V427M637.5 424V427M643.5 425V427M655.5 426V428M661.5 426V429M667.5 426V429M673.5 426V429M679.5 426V429M685.5 426V430M691.5 426V431M697.5 426V431M703.5 426V430M709.5 426V430M715.5 426V429M721.5 426V430M727.5 426V430M733.5 426V431M739.5 426V432M745.5 426V433M751.5 426V433M757.5 426V434M763.5 426V434M769.5 426V433M775.5 426V431M781.5 426V431M787.5 426V430M793.5 426V429M799.5 426V428M805.5 425V427M811.5 423V427M817.5 422V427M823.5 425V427M835.5 426V428M841.5 426V428M847.5 426V429M853.5 426V431M859.5 426V430M865.5 426V430M871.5 426V430M877.5 426V430M883.5 426V430M889.5 426V429M895.5 426V428M901.5 426V428M907.5 426V428M913.5 426V429M919.5 426V428M925.5 426V430M931.5 426V431M937.5 426V433M943.5 426V434M949.5 426V437M955.5 426V436M961.5 426V436M967.5 426V432M973.5 426V429M985.5 425V427M1009.5 425V427M1015.5 426V428M1021.5 426V430M1027.5 426V431M1033.5 426V431M1039.5 426V431M1045.5 426V430M1051.5 426V429M1057.5 426V430M1063.5 426V428M1069.5 425V427M1075.5 424V427M1081.5 423V427M1087.5 422V427M1093.5 421V427M1099.5 420V427M1105.5 420V427M1111.5 419V427M1117.5 420V427M1123.5 423V427M1129.5 423V427" stroke="#ff0000" stroke-width="1" fill="none"/>
<polyline points="0.0,424.4 10.5,425.8 17.6,426.1 24.6,424.7 35.1,420.3 42.2,420.3 52.7,423.3 61.5,422.4 68.5,415.9 77.3,411.5 86.1,407.1 95.7,406.4 105.4,408.9 112.4,411.5 121.2,415.2 130.0,414.7 138.8,415.2 145.8,414.2 151.1,415.0 165.1,415.2 175.7,418.0 186.2,421.7 193.3,422.8 202.0,422.9 210.8,425.6 217.8,426.5 228.4,427.0 237.2,425.6 240.0,426.1 248.8,427.3 257.6,428.2 266.4,428.6 273.4,426.1 283.9,423.8 298.0,419.1 310.3,415.0 324.3,413.3 331.4,410.7 337.5,408.9 343.7,404.0 352.4,400.1 359.5,398.4 378.8,398.4 391.1,392.6 403.4,392.6 408.7,393.6 415.7,391.0 433.3,391.0 442.0,392.7 450.8,392.2 466.6,390.4 476.3,390.4 480.0,394.8 487.0,400.1 494.1,405.4 501.1,408.9 511.6,412.4 522.2,410.3 532.7,413.3 541.5,413.3 546.8,411.5 555.5,411.5 564.3,413.5 590.7,413.5 603.0,412.1 617.0,409.4 629.3,409.4 636.4,408.4 645.1,408.4 653.9,410.3 669.7,412.4 682.0,414.7 694.3,418.0 706.6,419.1 717.2,419.1 720.0,420.3 727.0,420.8 737.6,424.7 749.9,429.1 762.2,432.6 778.0,432.6 781.5,433.5 790.3,433.1 800.8,431.4 811.4,427.3 817.5,425.6 825.4,427.3 839.5,429.6 848.3,431.4 853.5,434.4 864.1,435.2 874.6,436.5 883.4,437.9 888.7,436.5 909.7,436.5 918.5,437.4 930.8,440.9 943.1,447.2 950.1,453.3 957.2,454.9 960.0,456.7 965.3,455.5 974.1,451.1 982.8,448.8 990.7,447.5 996.9,449.3 1007.4,447.5 1014.5,448.8 1023.2,453.3 1037.3,456.3 1051.4,456.3 1057.5,457.6 1065.4,456.3 1072.4,452.8 1083.0,449.8 1093.5,445.8 1105.8,442.3 1116.4,439.1 1123.4,441.4 1128.7,441.4" fill="none" stroke="#ffff00" stroke-width="1" />
<polyline points="0.0,420.1 8.8,421.5 17.6,423.3 28.1,423.5 42.2,422.4 52.7,422.6 62.4,422.4 73.8,419.4 87.8,415.0 100.1,411.5 110.7,411.4 123.0,413.3 142.3,413.6 147.6,414.3 165.1,414.3 179.2,415.9 193.3,418.6 207.3,420.8 221.4,423.3 233.7,424.0 240.0,425.2 255.8,425.2 259.3,426.5 273.4,427.3 283.9,426.5 298.0,423.5 310.3,420.3 324.3,418.0 340.1,414.2 348.9,410.3 361.2,406.3 377.0,402.7 385.8,401.0 403.4,396.2 415.7,394.5 424.5,393.1 450.8,393.1 456.1,392.2 471.9,391.9 476.3,391.0 480.0,392.2 490.5,395.7 501.1,399.2 509.9,403.3 520.4,405.7 532.7,408.0 546.8,410.3 562.6,410.7 576.6,412.4 603.0,412.4 615.3,412.1 629.3,410.3 645.1,409.8 648.7,409.2 657.4,409.2 669.7,410.7 687.3,412.8 703.1,415.6 717.2,416.8 720.0,417.3 730.5,418.6 742.8,421.2 755.1,424.4 769.2,426.8 778.0,429.1 786.8,430.5 802.6,430.5 813.1,430.0 821.9,428.2 837.7,428.2 843.0,429.6 850.0,429.6 858.8,431.7 874.6,433.0 881.6,434.4 892.2,434.4 895.7,435.2 915.0,435.2 918.5,436.5 927.3,436.5 937.8,438.4 946.6,441.4 953.7,444.9 960.0,447.2 967.0,449.3 986.4,449.3 990.7,448.1 996.9,449.3 1002.2,448.4 1018.0,448.4 1023.2,449.3 1033.8,451.4 1047.8,453.7 1060.1,455.1 1070.7,455.5 1083.0,452.8 1100.5,450.2 1111.1,447.2 1121.6,444.4 1128.7,444.0" fill="none" stroke="#0000ff" stroke-width="1" />
<rect x="0" y="504" width="1131" height="1" fill="#0000ff"/>
<rect x="0" y="546" width="1131" height="1" fill="#ff0000"/>
<polyline points="0.0,543.7 7.0,543.2 13.2,544.9 19.3,544.0 24.6,539.6 31.6,532.6 37.8,522.4 43.9,516.8 49.2,518.6 55.3,524.7 61.5,528.2 67.6,519.4 73.8,509.8 79.9,501.0 86.1,496.6 91.4,495.2 97.5,497.5 103.7,502.7 109.8,509.2 116.0,515.0 122.1,519.4 128.3,519.1 133.5,516.3 138.8,514.2 144.9,515.0 152.8,521.2 159.9,523.3 166.9,524.7 175.7,527.3 181.0,530.0 187.1,535.2 193.3,538.4 200.3,538.4 207.3,539.6 212.6,543.2 217.8,549.3 223.1,548.4 229.3,542.3 235.4,537.0 240.0,534.4 253.2,533.1 259.3,532.3 265.5,531.4 271.6,525.6 277.8,518.6 283.9,512.4 290.1,508.4 296.2,505.4 302.4,500.1 308.5,498.4 313.8,497.1 319.9,497.5 326.1,496.6 332.2,496.2 337.5,494.5 343.7,493.4 349.8,494.0 356.0,495.2 362.1,498.4 368.3,501.0 374.4,502.7 380.5,503.3 386.7,501.9 392.8,500.1 399.0,499.6 405.1,501.0 410.4,502.2 415.7,501.0 421.8,500.1 428.9,499.6 435.0,500.1 440.3,501.3 446.4,502.4 452.6,502.2 458.7,501.0 464.9,499.8 470.1,498.9 475.4,498.0 480.0,504.5 487.0,517.7 492.3,531.7 499.3,542.3 505.5,545.4 511.6,543.2 517.8,537.0 523.9,530.9 529.2,526.5 535.3,526.1 541.5,527.3 547.6,522.1 553.8,515.9 559.9,512.4 566.1,511.5 572.2,511.0 578.4,508.9 584.5,507.1 590.7,506.3 596.8,503.6 603.0,501.0 609.1,499.6 615.3,498.7 620.5,497.1 626.7,496.2 632.8,494.8 638.1,494.0 643.4,493.4 649.5,496.2 655.7,499.2 661.8,504.5 668.0,508.0 673.3,512.4 679.4,515.4 685.6,519.4 691.7,527.0 697.8,534.9 704.0,541.7 710.1,538.8 716.3,534.9 720.0,533.5 727.0,535.2 733.2,542.3 739.3,546.7 745.5,550.5 751.6,549.3 757.8,549.3 763.9,544.9 769.2,541.0 775.3,535.2 781.5,534.4 787.6,535.2 792.9,535.2 799.1,529.1 805.2,520.3 811.4,512.4 817.5,505.0 823.7,505.4 828.9,509.8 835.1,519.4 841.2,527.3 847.4,533.5 853.5,541.4 859.7,547.5 865.8,551.1 872.0,550.5 878.1,551.4 884.3,552.8 889.5,552.8 895.7,550.2 901.8,548.4 908.0,547.9 914.1,546.7 920.3,548.4 926.4,551.1 932.6,553.2 937.8,554.2 944.0,553.7 950.1,554.0 955.4,551.4 960.0,549.3 967.9,542.3 974.1,536.1 979.3,530.0 985.5,526.5 991.6,526.5 997.8,529.1 1003.9,530.0 1010.1,529.1 1016.2,530.9 1021.5,537.0 1027.6,544.0 1033.8,545.8 1039.1,545.8 1045.2,544.4 1051.4,544.4 1057.5,546.7 1063.7,547.2 1069.8,547.2 1076.0,540.5 1081.2,536.1 1087.4,531.7 1093.5,528.2 1099.7,523.8 1105.8,514.2 1112.0,506.3 1117.2,502.7 1123.4,508.9 1128.7,517.3" fill="none" stroke="#ff0000" stroke-width="1" />
<polyline points="0.0,543.7 7.0,547.2 13.2,544.0 19.3,542.3 24.6,531.7 31.6,524.7 37.8,511.0 43.0,513.6 49.2,530.0 55.3,532.6 61.5,521.2 67.6,508.4 73.8,501.0 79.9,494.5 85.2,492.2 91.4,497.5 97.5,501.0 103.7,507.1 109.8,513.6 116.0,519.8 121.2,522.4 126.5,517.7 133.5,510.1 138.8,515.6 145.8,519.1 151.1,522.9 158.1,523.3 163.4,525.2 168.7,526.8 174.8,528.6 181.0,533.5 187.1,540.2 193.3,540.2 199.4,537.0 205.6,541.4 210.8,551.1 217.8,554.9 223.1,538.4 229.3,534.4 235.4,537.0 240.0,531.7 247.0,534.4 253.2,533.1 259.3,529.1 265.5,533.1 271.6,517.7 277.8,511.0 283.0,512.4 289.2,503.6 295.3,500.1 301.5,498.4 307.6,497.1 312.9,496.2 319.1,499.2 325.2,494.5 331.4,494.5 337.5,494.3 343.7,492.6 349.8,496.6 356.0,498.7 362.1,501.0 368.3,503.6 380.5,503.6 385.8,500.1 392.0,498.4 398.1,501.0 404.3,502.2 409.5,503.6 415.7,497.5 421.8,499.8 428.0,503.6 434.1,499.8 440.3,501.9 445.6,503.6 451.7,499.6 457.8,501.3 464.0,499.2 470.1,497.1 475.4,496.2 477.2,505.4 480.0,517.7 481.8,525.6 487.0,534.4 493.2,544.9 499.3,547.2 505.5,543.2 511.6,541.7 517.8,529.1 523.6,523.3 529.2,528.2 535.3,528.2 541.5,524.7 547.6,513.3 553.8,510.1 559.1,513.3 565.2,511.5 571.4,510.1 577.5,506.6 583.7,506.3 588.9,508.4 595.1,499.6 601.2,499.6 607.4,499.6 613.5,498.4 619.7,494.5 625.8,497.1 632.0,493.4 637.2,491.3 643.4,495.7 649.5,501.3 655.7,500.1 661.8,510.1 668.0,510.3 673.3,517.2 679.4,518.0 685.6,520.8 691.7,541.0 697.8,542.3 703.1,542.3 709.3,533.1 715.4,529.4 720.0,534.9 727.0,538.4 733.2,550.2 739.3,550.2 744.6,551.4 750.7,548.4 756.9,550.2 763.0,541.4 769.2,533.5 774.5,532.3 780.6,535.6 786.8,537.4 792.9,531.7 799.1,518.6 805.2,512.4 811.4,504.5 817.5,497.5 822.8,512.4 828.9,521.2 835.1,525.6 841.2,535.2 847.4,539.6 853.5,550.2 859.7,551.4 864.9,552.3 871.1,548.4 877.2,554.2 883.4,554.2 889.5,550.5 895.7,548.4 901.8,546.7 908.0,549.3 913.3,543.5 919.4,551.1 925.6,556.3 931.7,552.5 937.8,553.7 943.1,554.2 949.3,554.2 955.4,546.7 960.0,547.2 962.6,546.7 967.9,537.0 974.1,528.2 979.3,526.1 985.5,525.2 991.6,527.0 996.9,535.2 1003.0,528.2 1009.2,525.2 1015.3,538.8 1021.5,546.1 1026.8,547.2 1032.9,544.4 1039.1,546.1 1045.2,543.2 1051.4,544.0 1057.5,550.2 1063.7,545.8 1069.8,544.0 1075.1,533.5 1081.2,530.0 1087.4,532.3 1093.5,523.8 1099.7,515.9 1105.8,503.3 1112.0,500.1 1118.1,503.6 1123.4,523.8 1128.7,526.5" fill="none" stroke="#0000ff" stroke-width="1" />
<rect x="1131" y="37" width="1" height="560" fill="#000"/>
<rect x="0" y="572" width="1185" height="1" fill="#000"/>
<path d="M1132 55h5v1h-5zM1132 93h5v1h-5zM1132 132h5v1h-5zM1132 170h5v1h-5zM1132 209h5v1h-5zM1132 247h5v1h-5zM1132 290h5v1h-5zM1132 327h5v1h-5zM1132 390h5v1h-5zM1132 427h5v1h-5zM1132 490h5v1h-5zM1132 528h5v1h-5zM1 573h1v4h-1zM49 573h1v4h-1zM145 573h1v4h-1zM241 573h1v4h-1zM337 573h1v4h-1zM433 573h1v4h-1zM541 573h1v4h-1zM637 573h1v4h-1zM733 573h1v4h-1zM829 573h1v4h-1zM925 573h1v4h-1zM1021 573h1v9h-1zM1117 573h1v4h-1z" fill="#000"/>
<rect x="1134.5" y="355.5" width="39" height="14" fill="#fff" stroke="#000" stroke-width="1"/>
<rect x="1179.5" y="39.5" width="8" height="12" fill="#fff" stroke="#8c8c8c" stroke-width="1"/>
<path d="M1182 42h5l-1 1v3h-1l-3-3z" fill="#000"/>
<rect x="1179.5" y="274.5" width="8" height="12" fill="#fff" stroke="#8c8c8c" stroke-width="1"/>
<path d="M1182 277h5l-1 1v3h-1l-3-3z" fill="#000"/>
<rect x="1179.5" y="374.5" width="8" height="12" fill="#fff" stroke="#8c8c8c" stroke-width="1"/>
<path d="M1182 377h5l-1 1v3h-1l-3-3z" fill="#000"/>
<rect x="1179.5" y="474.5" width="8" height="12" fill="#fff" stroke="#8c8c8c" stroke-width="1"/>
<path d="M1182 477h5l-1 1v3h-1l-3-3z" fill="#000"/>
</g>
<g>
<text transform="scale(0.8,1)" x="1428.75 1436.25 1443.75 1451.25 1458.75 1466.25" y="61" class="l" fill="#000">12,380</text>
<text transform="scale(0.8,1)" x="1428.75 1436.25 1443.75 1451.25 1458.75 1466.25" y="99" class="l" fill="#000">12,330</text>
<text transform="scale(0.8,1)" x="1428.75 1436.25 1443.75 1451.25 1458.75 1466.25" y="138" class="l" fill="#000">12,280</text>
<text transform="scale(0.8,1)" x="1428.75 1436.25 1443.75 1451.25 1458.75 1466.25" y="176" class="l" fill="#000">12,230</text>
<text transform="scale(0.8,1)" x="1428.75 1436.25 1443.75 1451.25 1458.75 1466.25" y="215" class="l" fill="#000">12,180</text>
<text transform="scale(0.8,1)" x="1428.75 1436.25 1443.75 1451.25 1458.75 1466.25" y="253" class="l" fill="#000">12,130</text>
<text transform="scale(0.8,1)" x="1428.75 1436.25 1443.75 1451.25 1458.75 1466.25" y="296" class="l" fill="#000">295.00</text>
<text transform="scale(0.8,1)" x="1428.75 1436.25 1443.75 1451.25 1458.75 1466.25" y="333" class="l" fill="#000">130.00</text>
<text transform="scale(0.8,1)" x="1428.75 1436.25 1443.75 1451.25 1458.75" y="396" class="l" fill="#000">26.50</text>
<text transform="scale(0.8,1)" x="1428.75 1436.25 1443.75 1451.25 1458.75" y="433" class="l" fill="#000">−0.50</text>
<text transform="scale(0.8,1)" x="1428.75 1436.25 1443.75 1451.25 1458.75 1466.25" y="496" class="l" fill="#000">100.00</text>
<text transform="scale(0.8,1)" x="1428.75 1436.25 1443.75 1451.25 1458.75" y="534" class="l" fill="#000">45.00</text>
<text x="1136" y="367" class="c" fill="#000">×</text><text transform="scale(0.8,1)" x="1446.25 1453.75 1461.25" y="367" class="l" fill="#000">100</text>
<text transform="scale(0.8,1)" x="3.75 11.25 18.75 26.25 33.75" y="592" class="l" fill="#000">02:40</text>
<text transform="scale(0.8,1)" x="63.75 71.25 78.75 86.25 93.75" y="592" class="l" fill="#000">09:20</text>
<text transform="scale(0.8,1)" x="183.75 191.25 198.75 206.25 213.75" y="592" class="l" fill="#000">10:40</text>
<text transform="scale(0.8,1)" x="303.75 311.25 318.75 326.25 333.75" y="592" class="l" fill="#000">12:00</text>
<text transform="scale(0.8,1)" x="423.75 431.25 438.75 446.25 453.75" y="592" class="l" fill="#000">13:20</text>
<text transform="scale(0.8,1)" x="543.75 551.25 558.75 566.25 573.75" y="592" class="l" fill="#000">14:40</text>
<text transform="scale(0.8,1)" x="678.75 686.25 693.75 701.25 708.75" y="592" class="l" fill="#000">17:20</text>
<text transform="scale(0.8,1)" x="798.75 806.25 813.75 821.25 828.75" y="592" class="l" fill="#000">18:40</text>
<text transform="scale(0.8,1)" x="918.75 926.25 933.75 941.25 948.75" y="592" class="l" fill="#000">20:00</text>
<text transform="scale(0.8,1)" x="1038.75 1046.25 1053.75 1061.25 1068.75" y="592" class="l" fill="#000">21:20</text>
<text transform="scale(0.8,1)" x="1158.75 1166.25 1173.75 1181.25 1188.75" y="592" class="l" fill="#000">22:40</text>
<text transform="scale(0.8,1)" x="1278.75 1286.25 1293.75 1301.25 1308.75" y="592" class="l" fill="#000">04/04</text>
<g clip-path="url(#cl)"><text transform="scale(0.8,1)" x="1398.75 1406.25 1413.75 1421.25 1428.75" y="592" class="l" fill="#000">01:20</text></g>
<defs><clipPath id="cl"><rect x="1100" y="575" width="31" height="25"/></clipPath><clipPath id="cl0"><rect x="0" y="37" width="1185" height="600"/></clipPath></defs>
<g clip-path="url(#cl0)">
<text x="-2" y="50" class="c" fill="#000">日経</text><text transform="scale(0.8,1)" x="31.25 38.75 46.25 61.25 68.75 76.25 91.25 98.75 106.25 113.75 121.25 128.75 143.75" y="50" class="l" fill="#000">225ini13/06(5</text><text transform="scale(0.6,1)" x="71.67" y="50" class="l" fill="#000">m</text><text x="118" y="50" class="c" fill="#000">分</text><text transform="scale(0.8,1)" x="166.25 181.25 188.75 196.25 203.75 211.25 218.75 226.25 233.75 241.25 248.75 263.75 278.75 286.25 293.75 301.25 308.75 316.25 323.75 331.25 338.75 346.25 361.25" y="50" class="l" fill="#000">,2013/04/02−2013/04/04)</text>
<text x="313" y="50" class="c" fill="#000">一目均衡表</text><text transform="scale(0.8,1)" x="470.00 485.00 492.50 507.50 515.00 522.50 537.50 545.00 560.00" y="50" class="l" fill="#000">(9,26,52)</text>
<text x="471" y="50" class="c" fill="#000">移動平均</text><text transform="scale(0.8,1)" x="652.50 675.00 682.50 690.00 697.50 705.00 720.00 727.50 742.50" y="50" class="l" fill="#000">(lose,75)</text><text transform="scale(0.66,1)" x="809.09" y="50" class="l" fill="#000">C</text>
<text x="617" y="50" class="c" fill="#000">移動平均</text><text transform="scale(0.8,1)" x="835.00 857.50 865.00 872.50 880.00 887.50 902.50 910.00 917.50 932.50" y="50" class="l" fill="#000">(lose,150)</text><text transform="scale(0.66,1)" x="1030.30" y="50" class="l" fill="#000">C</text>
<text x="769" y="50" class="c" fill="#000">移動平均</text><text transform="scale(0.8,1)" x="1025.00 1047.50 1055.00 1062.50 1070.00 1077.50 1092.50 1100.00 1115.00" y="50" class="l" fill="#000">(lose,20)</text><text transform="scale(0.66,1)" x="1260.61" y="50" class="l" fill="#000">C</text>
<text x="915" y="50" class="c" fill="#000">移動平均</text><text transform="scale(0.8,1)" x="1207.50 1230.00 1237.50 1245.00 1252.50 1260.00 1275.00 1282.50 1297.50" y="50" class="l" fill="#000">(lose,10)</text><text transform="scale(0.66,1)" x="1481.82" y="50" class="l" fill="#000">C</text>
<text x="-2" y="64" class="c" fill="#000">移動平均</text><text transform="scale(0.8,1)" x="61.25 83.75 91.25 98.75 106.25 113.75 128.75 136.25 151.25" y="64" class="l" fill="#000">(lose,75)</text><text transform="scale(0.66,1)" x="92.42" y="64" class="l" fill="#000">C</text>
<text x="145" y="64" class="c" fill="#000">移動平均</text><text transform="scale(0.8,1)" x="245.00 267.50 275.00 282.50 290.00 297.50 312.50 320.00 335.00" y="64" class="l" fill="#000">(lose,25)</text><text transform="scale(0.66,1)" x="315.15" y="64" class="l" fill="#000">C</text>
<text x="291" y="64" class="c" fill="#000">移動平均</text><text transform="scale(0.8,1)" x="427.50 450.00 457.50 465.00 472.50 480.00 495.00 502.50 517.50" y="64" class="l" fill="#000">(lose,40)</text><text transform="scale(0.66,1)" x="536.36" y="64" class="l" fill="#000">C</text>
<text x="437" y="64" class="c" fill="#000">移動平均</text><text transform="scale(0.8,1)" x="610.00 632.50 640.00 647.50 655.00 662.50 677.50 692.50" y="64" class="l" fill="#000">(lose,5)</text><text transform="scale(0.66,1)" x="757.58" y="64" class="l" fill="#000">C</text>
<text x="-2" y="285" class="c" fill="#000">出来高</text>
<text transform="scale(0.56,1)" x="1.79" y="385" class="l" fill="#000">M</text><text transform="scale(0.68,1)" x="10.29" y="385" class="l" fill="#000">A</text><text transform="scale(0.66,1)" x="19.70 28.79" y="385" class="l" fill="#000">CD</text><text transform="scale(0.8,1)" x="31.25 46.25 53.75 61.25 76.25 83.75 91.25 106.25 121.25" y="385" class="l" fill="#000">(12,26,9)</text>
<text x="-2" y="485" class="c" fill="#000">スロー・ストキャスティクス</text><text transform="scale(0.8,1)" x="196.25 211.25 218.75 226.25 241.25 248.75 263.75 271.25 278.75 293.75 301.25 316.25" y="485" class="l" fill="#000">(14,3,80,20)</text>
</g>
</g>
</svg>
</body></html>
